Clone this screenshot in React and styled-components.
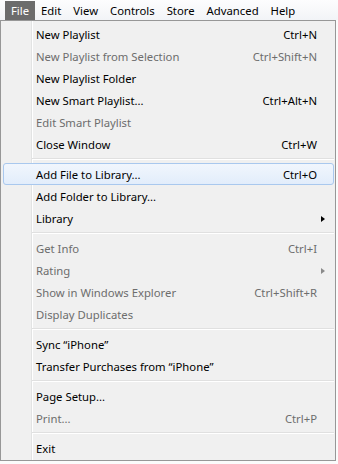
import styled, { createGlobalStyle } from "styled-components";

const Global = createGlobalStyle`
  html, body {
    margin: 0;
    padding: 0;
    background: #ffffff;
  }
  body {
    font-family: "Noto Sans", "Open Sans", sans-serif;
    font-size: 11.3px;
  }
`;

const Page = styled.div`
  width: 338px;
  height: 464px;
  overflow: hidden;
  background: #fbfbfb;
`;

const MenuBar = styled.div`
  display: flex;
  align-items: stretch;
  height: 20px;
  padding-left: 5px;
  background: linear-gradient(#fdfdfe, #f2f4f7);
`;

const BarItem = styled.div`
  display: flex;
  align-items: center;
  padding: 0 6px;
  color: ${(p) => (p.$open ? "#ffffff" : "#000000")};
  background: ${(p) => (p.$open ? "#6c6c6c" : "transparent")};
  margin-top: 1px;
`;

const Popup = styled.div`
  width: 336px;
  box-sizing: border-box;
  border: 1px solid #979797;
  padding: 2px 2px 1px 2px;
  background-color: #f0f0f0;
  background-image: linear-gradient(
    to right,
    transparent 30px,
    #e2e3e3 30px,
    #e2e3e3 31px,
    #ffffff 31px,
    #ffffff 32px,
    transparent 32px
  );
`;

const Item = styled.div`
  display: grid;
  grid-template-columns: 1fr auto 16px;
  align-items: center;
  height: 22px;
  box-sizing: border-box;
  padding-left: 32px;
  padding-top: 1px;
  margin-right: -1px;
  color: ${(p) => (p.$disabled ? "#6d6d6d" : "#000000")};
  border: 1px solid ${(p) => (p.$hot ? "#a9c8ee" : "transparent")};
  border-radius: 3px;
  background: ${(p) =>
    p.$hot ? "linear-gradient(#f1f6fd, #e2edfb)" : "transparent"};
  line-height: 1;
`;

const Label = styled.span`
  white-space: nowrap;
`;

const Shortcut = styled.span`
  white-space: nowrap;
  text-align: right;
`;

const Arrow = styled.span`
  justify-self: start;
  margin-left: 4px;
  width: 0;
  height: 0;
  border-top: 3.5px solid transparent;
  border-bottom: 3.5px solid transparent;
  border-left: 4px solid ${(p) => (p.$disabled ? "#8a8a8a" : "#000000")};
`;

const Separator = styled.div`
  height: 8px;
  margin-left: 29px;
  margin-right: -1px;
  display: flex;
  align-items: center;

  &::before {
    content: "";
    flex: 1;
    height: 0;
    border-top: 1px solid #e0e0e0;
    border-bottom: 1px solid #ffffff;
  }
`;

const groups = [
  [
    { label: "New Playlist", key: "Ctrl+N" },
    { label: "New Playlist from Selection", key: "Ctrl+Shift+N", disabled: true },
    { label: "New Playlist Folder" },
    { label: "New Smart Playlist...", key: "Ctrl+Alt+N" },
    { label: "Edit Smart Playlist", disabled: true },
    { label: "Close Window", key: "Ctrl+W" },
  ],
  [
    { label: "Add File to Library...", key: "Ctrl+O", hot: true },
    { label: "Add Folder to Library..." },
    { label: "Library", sub: true },
  ],
  [
    { label: "Get Info", key: "Ctrl+I", disabled: true },
    { label: "Rating", sub: true, disabled: true },
    { label: "Show in Windows Explorer", key: "Ctrl+Shift+R", disabled: true },
    { label: "Display Duplicates", disabled: true },
  ],
  [
    { label: "Sync \u201CiPhone\u201D" },
    { label: "Transfer Purchases from \u201CiPhone\u201D" },
  ],
  [
    { label: "Page Setup..." },
    { label: "Print...", key: "Ctrl+P", disabled: true },
  ],
  [{ label: "Exit" }],
];

const menus = ["File", "Edit", "View", "Controls", "Store", "Advanced", "Help"];

export default function App() {
  return (
    <Page>
      <Global />
      <MenuBar>
        {menus.map((m, i) => (
          <BarItem key={m} $open={i === 0}>
            {m}
          </BarItem>
        ))}
      </MenuBar>
      <Popup>
        {groups.map((g, gi) => (
          <div key={gi}>
            {gi > 0 && <Separator />}
            {g.map((it) => (
              <Item key={it.label} $disabled={it.disabled} $hot={it.hot}>
                <Label>{it.label}</Label>
                <Shortcut>{it.key || ""}</Shortcut>
                {it.sub ? <Arrow $disabled={it.disabled} /> : <span />}
              </Item>
            ))}
          </div>
        ))}
      </Popup>
    </Page>
  );
}
